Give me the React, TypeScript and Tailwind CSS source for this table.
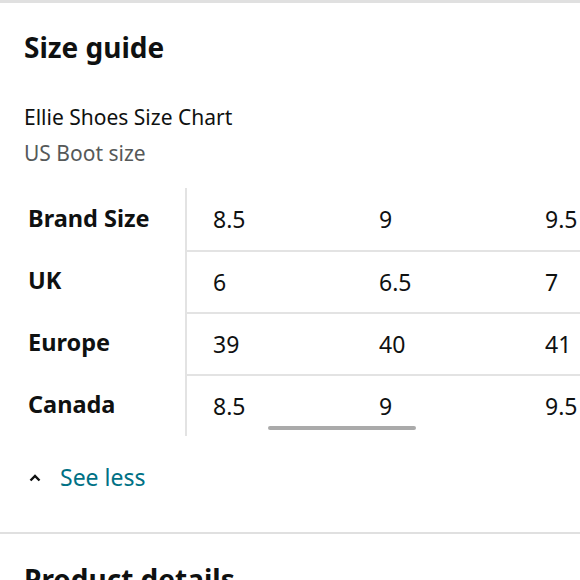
import React from 'react';

const rows = [
  { label: 'Brand Size', values: ['8.5', '9', '9.5'] },
  { label: 'UK', values: ['6', '6.5', '7'] },
  { label: 'Europe', values: ['39', '40', '41'] },
  { label: 'Canada', values: ['8.5', '9', '9.5'] },
];

const App: React.FC = () => {
  return (
    <div
      className="relative h-[580px] w-[580px] overflow-hidden bg-white text-[#0f1111]"
      style={{ fontFamily: '"Noto Sans", "Open Sans", sans-serif' }}
    >
      <div className="h-[3px] bg-[#e0e0e0]" />

      <section className="px-6 pt-[24px]">
        <h2 className="text-[28px] leading-[40px] font-bold">Size guide</h2>
        <p className="mt-[37px] text-[21px] leading-[26px]">Ellie Shoes Size Chart</p>
        <p className="mt-[10px] text-[21px] leading-[26px] text-[#565959]">US Boot size</p>
      </section>

      <div className="relative mt-[22px] overflow-hidden">
        <div className="flex">
          <div className="w-[185px] shrink-0 pl-[28px]">
            {rows.map((row) => (
              <div key={row.label} className="flex h-[62px] items-center text-[23.5px] font-bold">
                {row.label}
              </div>
            ))}
          </div>
          <div className="w-[2px] shrink-0 bg-[#e3e3e3]" />
          <div className="flex-1">
            {rows.map((row, i) => (
              <div
                key={row.label}
                className={`flex h-[62px] items-center ${i > 0 ? 'border-t-2 border-[#e3e3e3]' : ''}`}
              >
                {row.values.map((v, j) => (
                  <div key={j} className="w-[166px] shrink-0 pl-[26px] text-[23px]">
                    {v}
                  </div>
                ))}
              </div>
            ))}
          </div>
        </div>
        <div className="absolute bottom-[6px] left-[268px] h-[4px] w-[148px] rounded-full bg-[#aaaaaa]" />
      </div>

      <button className="mt-[24px] flex items-center gap-[19px] pl-[29px] text-[23px] leading-[34px] text-[#007185]">
        <svg width="12" height="9" viewBox="0 0 12 9" fill="none">
          <path d="M1.5 7.5 L6 3 L10.5 7.5" stroke="#0f1111" strokeWidth="2.4" />
        </svg>
        <span>See less</span>
      </button>

      <div className="mt-[38px] h-[2px] bg-[#e0e0e0]" />

      <h2 className="px-6 pt-[24px] text-[28px] leading-[42px] font-bold">Product details</h2>
    </div>
  );
};

export default App;
